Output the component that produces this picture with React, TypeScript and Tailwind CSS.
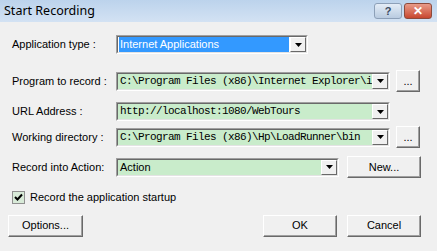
import React from "react";

const sans = { fontFamily: '"Liberation Sans", Arial, sans-serif' };
const mono = { fontFamily: '"Liberation Mono", "Courier New", monospace' };

function Arrow() {
  return (
    <div className="w-[16px] h-[15px] shrink-0 flex items-center justify-center bg-[#f0f0f0] border border-t-white border-l-white border-b-[#696969] border-r-[#696969]">
      <svg width="7" height="4" viewBox="0 0 7 4">
        <path d="M0 0H7L3.5 4Z" fill="#000" />
      </svg>
    </div>
  );
}

function Combo({ text, monoFont = true, width, selected = false }: { text: string; monoFont?: boolean; width: string; selected?: boolean }) {
  return (
    <div className={`${width} h-[19px] shrink-0 flex items-center border border-t-[#a0a0a0] border-l-[#a0a0a0] border-b-white border-r-white`}>
      <div className={`flex-1 min-w-0 h-full flex items-center border border-t-[#696969] border-l-[#696969] border-b-[#e3e3e3] border-r-[#e3e3e3] ${selected ? "bg-white" : "bg-[#c9eccb]"}`}>
        {selected ? (
          <div className="flex-1 min-w-0 h-full flex items-center pl-[1px] pr-[1px]">
            <div className="flex-1 min-w-0 h-[15px] bg-[#3399ff] text-white text-[11px] leading-[15px] pl-[1px] overflow-hidden whitespace-nowrap" style={sans}>
              {text}
            </div>
          </div>
        ) : (
          <div
            className={`flex-1 min-w-0 overflow-hidden whitespace-nowrap pl-[2px] ${monoFont ? "text-[11px] tracking-[-0.6px]" : "text-[11px]"} text-black`}
            style={monoFont ? mono : sans}
          >
            {text}
          </div>
        )}
        <Arrow />
      </div>
    </div>
  );
}

function Btn({ label, w }: { label: string; w: string }) {
  return (
    <div className={`${w} h-[22px] shrink-0 flex items-center justify-center bg-[#f0f0f0] border border-t-white border-l-white border-b-[#696969] border-r-[#696969] shadow-[inset_-1px_-1px_0_#a0a0a0] text-[11px] text-black`} style={sans}>
      {label}
    </div>
  );
}

function Label({ text }: { text: string }) {
  return (
    <div className="w-[104px] shrink-0 text-[11px] text-black whitespace-nowrap" style={sans}>
      {text}
    </div>
  );
}

export default function App() {
  return (
    <div className="w-[437px] h-[251px] bg-[#f0f0f0] flex flex-col overflow-hidden" style={sans}>
      <div className="h-[22px] shrink-0 flex items-center justify-between bg-gradient-to-b from-[#bcd3ec] to-[#d3e2f3] pl-[4px] pr-[5px]">
        <div className="text-[12.5px] text-black" style={{ fontFamily: '"Noto Sans", "Open Sans", sans-serif' }}>Start Recording</div>
        <div className="flex gap-[2px] items-center">
          <div className="w-[28px] h-[16px] rounded-[3px] border border-[#8da0b8] bg-gradient-to-b from-[#e4edf7] to-[#b9cbe0] flex items-center justify-center text-[11px] font-bold text-[#3a4a60]">?</div>
          <div className="w-[28px] h-[16px] rounded-[3px] border border-[#8c4a3c] bg-gradient-to-b from-[#e89a88] to-[#c7462e] flex items-center justify-center text-[12px] font-bold text-white">✕</div>
        </div>
      </div>
      <div className="flex-1 flex flex-col pl-[12px] pr-[16px]">
        <div className="flex items-center mt-[13px]">
          <Label text="Application type :" />
          <Combo text="Internet Applications" monoFont={false} width="w-[192px]" selected />
        </div>
        <div className="flex items-center mt-[16px]">
          <Label text="Program to record :" />
          <Combo text="C:\Program Files (x86)\Internet Explorer\i" width="w-[274px]" />
          <div className="ml-[6px]"><Btn label="..." w="w-[24px]" /></div>
        </div>
        <div className="flex items-center mt-[10px]">
          <Label text="URL Address :" />
          <Combo text="http://localhost:1080/WebTours" width="w-[274px]" />
        </div>
        <div className="flex items-center mt-[5px]">
          <Label text="Working directory :" />
          <Combo text="C:\Program Files (x86)\Hp\LoadRunner\bin" width="w-[274px]" />
          <div className="ml-[6px]"><Btn label="..." w="w-[24px]" /></div>
        </div>
        <div className="flex items-center mt-[8px]">
          <Label text="Record into Action:" />
          <Combo text="Action" monoFont={false} width="w-[223px]" />
          <div className="ml-[8px]"><Btn label="New..." w="w-[74px]" /></div>
        </div>
        <div className="flex items-center mt-[11px]">
          <div className="w-[13px] h-[13px] bg-[#d8ead8] border border-[#8f8f8f] flex items-center justify-center">
            <svg width="9" height="9" viewBox="0 0 9 9"><path d="M1 4L3.5 6.5L8 1.5" stroke="#000" strokeWidth="2" fill="none" /></svg>
          </div>
          <div className="ml-[5px] text-[11px] text-black">Record the application startup</div>
        </div>
        <div className="flex items-center mt-[9px] -ml-[4px]">
          <Btn label="Options..." w="w-[75px]" />
          <div className="flex-1" />
          <Btn label="OK" w="w-[74px]" />
          <div className="ml-[10px]"><Btn label="Cancel" w="w-[74px]" /></div>
        </div>
      </div>
    </div>
  );
}
